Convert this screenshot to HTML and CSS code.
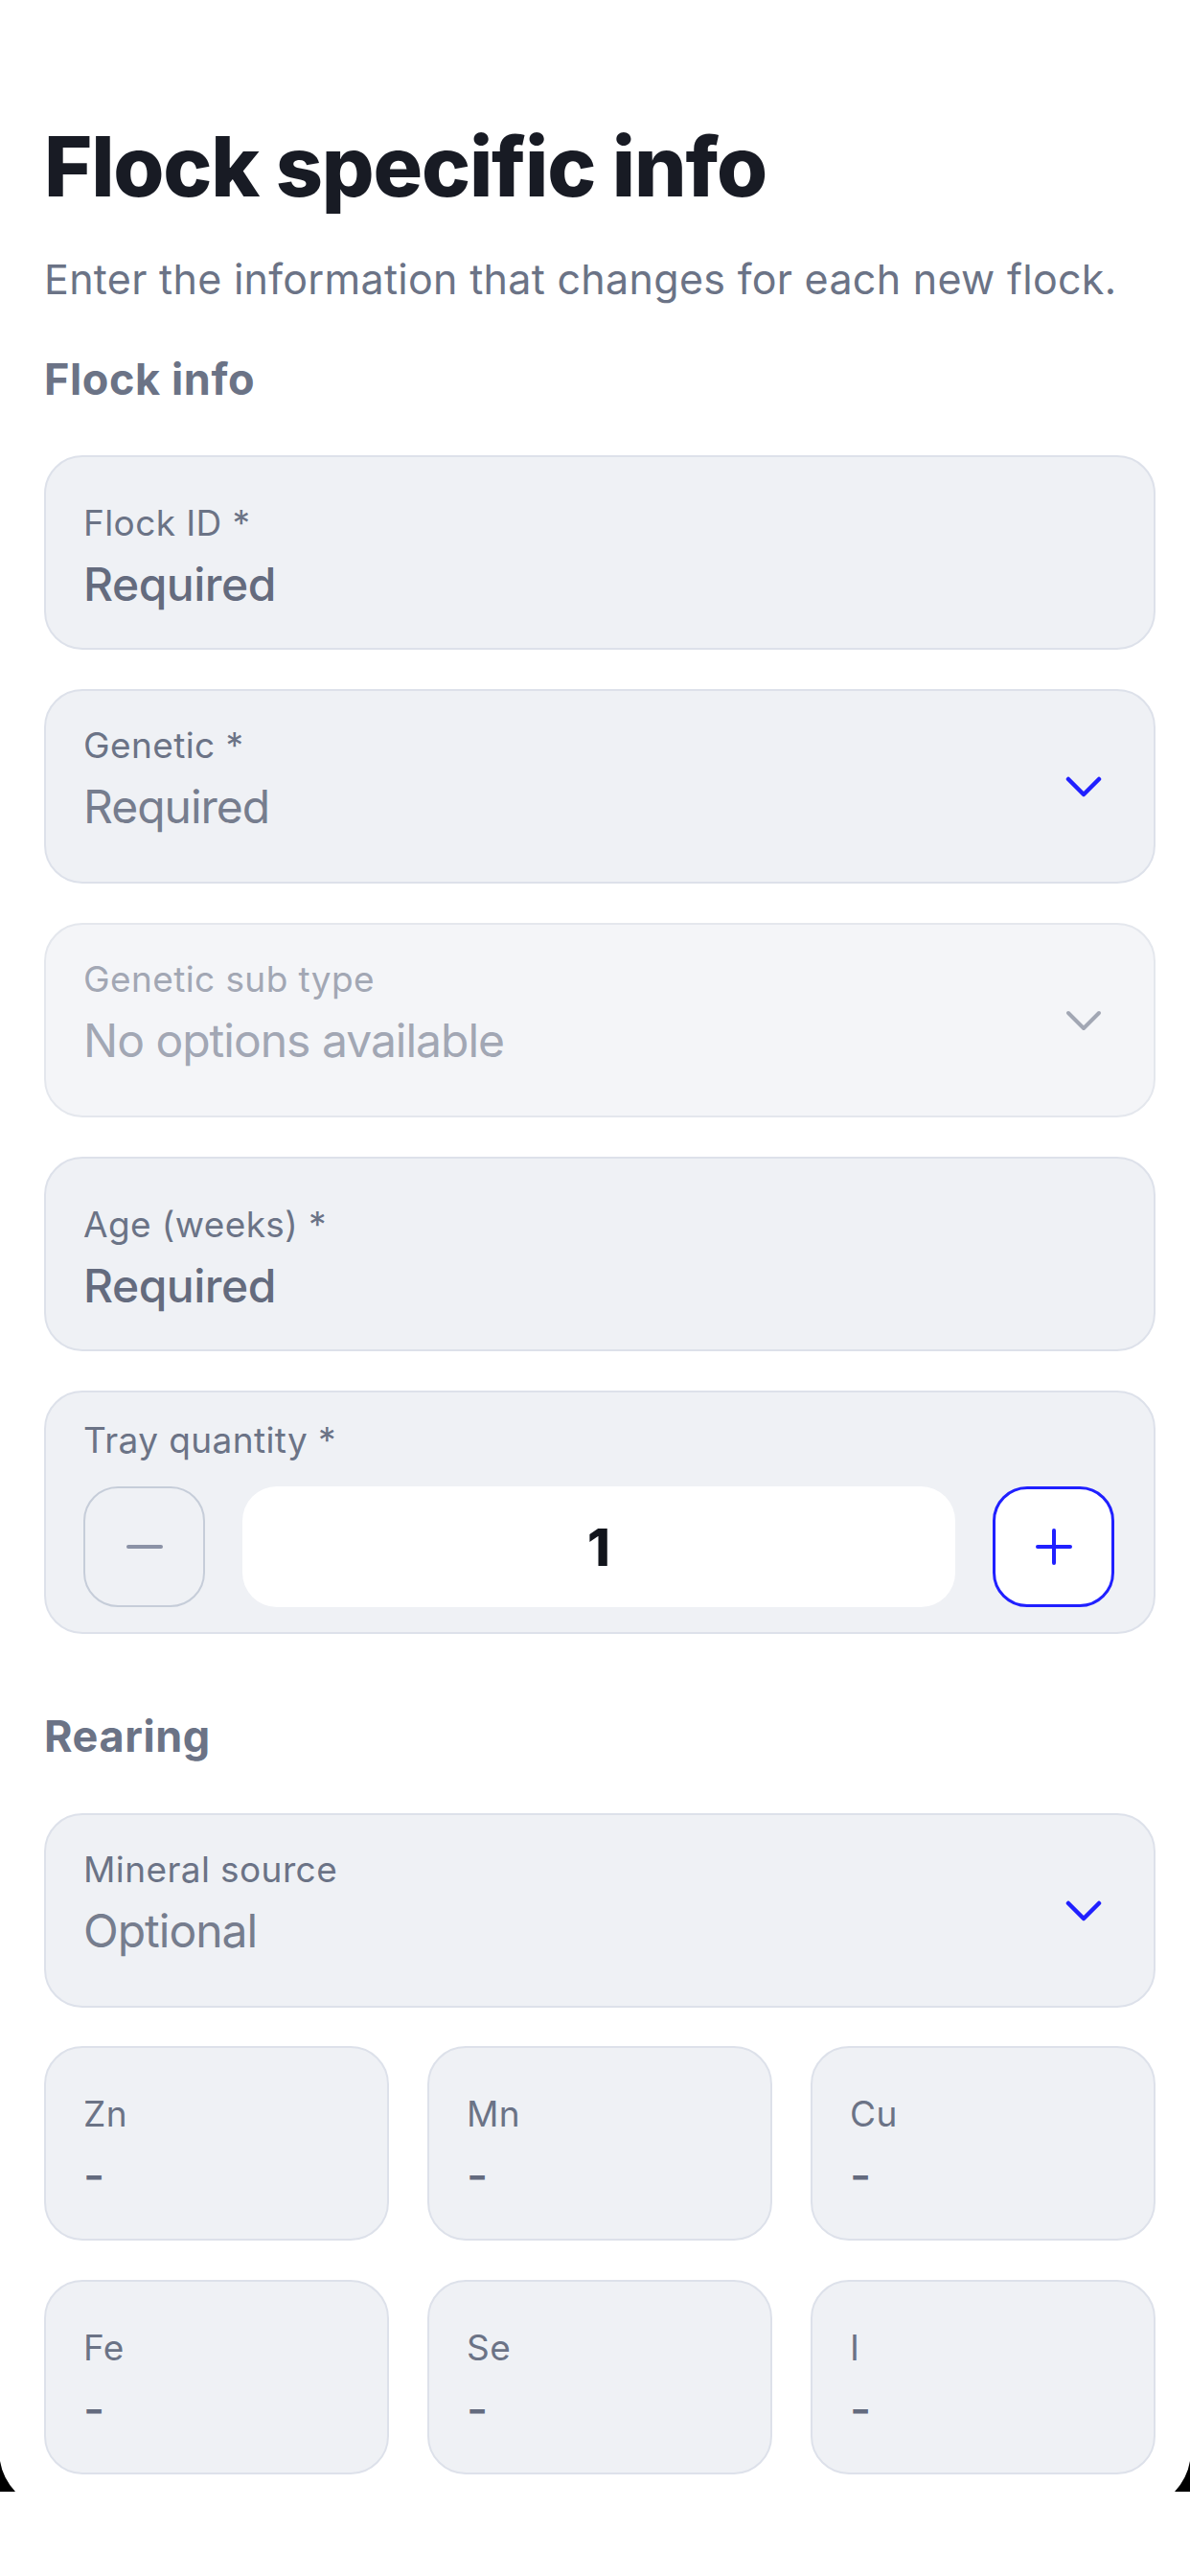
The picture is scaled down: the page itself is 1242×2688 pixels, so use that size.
FILE: index.html
```html
<!DOCTYPE html>
<html lang="en">
<head>
    <meta charset="UTF-8">
    <meta name="viewport" content="width=device-width, initial-scale=1.0">
    <title>Flock specific info</title>
    <link rel="stylesheet" href="styles.css">
</head>
<body>
    <div class="screen">
        <h1 class="title">Flock specific info</h1>
        <p class="intro">Enter the information that changes for each new flock.</p>

        <h2 class="section">Flock info</h2>
        <div class="fields">
            <div class="field">
                <span class="field-label">Flock ID *</span>
                <span class="field-value">Required</span>
            </div>

            <div class="field select">
                <div class="field-text">
                    <span class="field-label">Genetic *</span>
                    <span class="field-value">Required</span>
                </div>
                <svg class="chevron" width="38" height="22" viewBox="0 0 38 22"><path d="M3 3l16 16 16-16" fill="none" stroke="currentColor" stroke-width="4.5" stroke-linecap="round" stroke-linejoin="round"/></svg>
            </div>

            <div class="field select disabled">
                <div class="field-text">
                    <span class="field-label">Genetic sub type</span>
                    <span class="field-value">No options available</span>
                </div>
                <svg class="chevron" width="38" height="22" viewBox="0 0 38 22"><path d="M3 3l16 16 16-16" fill="none" stroke="currentColor" stroke-width="4" stroke-linecap="round" stroke-linejoin="round"/></svg>
            </div>

            <div class="field">
                <span class="field-label">Age (weeks) *</span>
                <span class="field-value">Required</span>
            </div>

            <div class="field stepper">
                <span class="field-label">Tray quantity *</span>
                <div class="stepper-row">
                    <div class="step-btn minus">
                        <svg width="38" height="6" viewBox="0 0 38 6"><path d="M2 3h34" stroke="currentColor" stroke-width="4" stroke-linecap="round"/></svg>
                    </div>
                    <div class="qty">1</div>
                    <div class="step-btn plus">
                        <svg width="40" height="40" viewBox="0 0 40 40"><path d="M20 3v34M3 20h34" stroke="currentColor" stroke-width="4" stroke-linecap="round"/></svg>
                    </div>
                </div>
            </div>
        </div>

        <h2 class="section rearing">Rearing</h2>
        <div class="field select mineral">
            <div class="field-text">
                <span class="field-label">Mineral source</span>
                <span class="field-value">Optional</span>
            </div>
            <svg class="chevron" width="38" height="22" viewBox="0 0 38 22"><path d="M3 3l16 16 16-16" fill="none" stroke="currentColor" stroke-width="4.5" stroke-linecap="round" stroke-linejoin="round"/></svg>
        </div>

        <div class="minerals">
            <div class="field"><span class="field-label">Zn</span><span class="field-value">-</span></div>
            <div class="field"><span class="field-label">Mn</span><span class="field-value">-</span></div>
            <div class="field"><span class="field-label">Cu</span><span class="field-value">-</span></div>
            <div class="field"><span class="field-label">Fe</span><span class="field-value">-</span></div>
            <div class="field"><span class="field-label">Se</span><span class="field-value">-</span></div>
            <div class="field"><span class="field-label">I</span><span class="field-value">-</span></div>
        </div>

        <!-- esquinas del marco del dispositivo -->
        <svg class="corner left" width="16" height="32" viewBox="0 0 16 32"><path d="M0 0Q3 18 16 32H0Z" fill="#000"/></svg>
        <svg class="corner right" width="16" height="32" viewBox="0 0 16 32"><path d="M16 0Q13 18 0 32H16Z" fill="#000"/></svg>
    </div>
</body>
</html>
```

FILE: styles.css
```css
body {
    margin: 0;
    background-color: #FFFFFF;
    font-family: Inter, "Noto Sans", sans-serif;
    color: #6B7386;
}
.screen {
    position: relative;
    box-sizing: border-box;
    min-height: 2688px;
    padding: 122px 36px 0 46px;
}
.title {
    margin: 0;
    font-size: 86px;
    line-height: 104px;
    font-weight: 800;
    letter-spacing: -1.2px;
    color: #181B24;
}
.intro {
    margin: 39px 0 0 0;
    font-size: 43px;
    line-height: 52px;
    letter-spacing: 0.3px;
    color: #6B7386;
}
.section {
    margin: 52px 0 0 0;
    font-size: 45px;
    line-height: 54px;
    font-weight: 700;
    letter-spacing: 0.6px;
    color: #6B7386;
}
.section.rearing {
    margin-top: 80px;
}
.fields {
    display: flex;
    flex-direction: column;
    gap: 41px;
    margin-top: 52px;
}
.field {
    box-sizing: border-box;
    height: 203px;
    display: flex;
    flex-direction: column;
    padding: 47px 40px 0 39px;
    background-color: #EFF1F5;
    border: 2px solid #DDE1EA;
    border-radius: 40px;
}
.field-label {
    font-size: 37px;
    line-height: 44px;
    letter-spacing: 0.4px;
    color: #6B7386;
}
.field-value {
    margin-top: 13px;
    font-size: 48px;
    line-height: 58px;
    font-weight: 500;
    letter-spacing: -0.5px;
    color: #646B7E;
}
.field.select {
    flex-direction: row;
    align-items: center;
    padding: 0 54px 0 39px;
}
.field.select .field-text {
    align-self: flex-start;
    flex: 1;
    display: flex;
    flex-direction: column;
    padding-top: 35px;
}
.field.select .field-value {
    font-weight: 400;
    letter-spacing: -1px;
    color: #767D8E;
}
.chevron {
    color: #2020FF;
}
.field.disabled {
    background-color: #F4F5F8;
    border-color: #E4E7ED;
}
.field.disabled .field-label,
.field.disabled .field-value,
.field.disabled .chevron {
    color: #A2A7B4;
}
.field.stepper {
    height: 254px;
    padding: 28px 41px 0 39px;
}
.stepper-row {
    display: flex;
    gap: 39px;
    margin-top: 26px;
}
.step-btn {
    box-sizing: border-box;
    width: 127px;
    height: 126px;
    display: flex;
    align-items: center;
    justify-content: center;
    border-radius: 36px;
}
.step-btn.minus {
    border: 2.5px solid #C6CDD9;
    color: #8B92A6;
}
.step-btn.plus {
    background-color: #FFFFFF;
    border: 3px solid #2020FF;
    color: #2020FF;
}
.qty {
    flex: 1;
    display: flex;
    align-items: center;
    justify-content: center;
    background-color: #FFFFFF;
    border-radius: 36px;
    font-size: 54px;
    font-weight: 800;
    color: #12151C;
}
.field.mineral {
    margin-top: 53px;
}
.minerals {
    display: grid;
    grid-template-columns: repeat(3, 1fr);
    gap: 41px 40px;
    margin-top: 40px;
}
.corner {
    position: absolute;
    top: 2568px;
}
.corner.left {
    left: 0;
}
.corner.right {
    right: 0;
}
```
